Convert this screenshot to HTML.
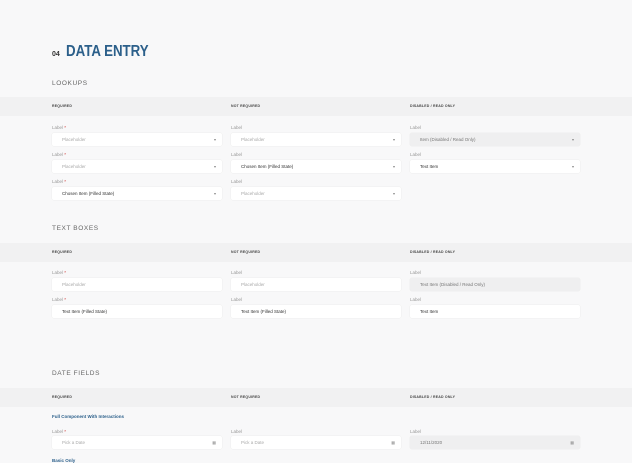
<!DOCTYPE html><html><head><style>
body{margin:0;width:632px;height:462px;background:#f8f8f9;font-family:"Liberation Sans",sans-serif;position:relative;overflow:hidden}
.a{position:absolute;white-space:nowrap}
.band{position:absolute;left:0;width:632px;height:19px;background:#f1f1f2}
.h{position:absolute;font-size:3.5px;font-weight:bold;color:#444;letter-spacing:.2px}
.l{position:absolute;font-size:4.5px;color:#999}
.l b{color:#c33;font-weight:normal}
.f{position:absolute;width:170px;height:13px;background:#fff;border-radius:2px;font-size:4.5px;line-height:13px;text-indent:10px;color:#333;box-shadow:0 0 0 .5px #eee}
.f.p{color:#aaa}.f.d{background:#efeff0;color:#777}
.f i{position:absolute;right:6px;top:0;font-style:normal;font-size:4px;color:#888}
.s{position:absolute;left:52px;font-size:6.5px;color:#666;letter-spacing:.6px}
</style></head><body>
<div class="a" style="left:52px;top:51px;font-size:7px;font-weight:bold;color:#333">04</div>
<div class="a" style="left:66px;top:43px;font-size:16px;font-weight:bold;color:#2b5f8a;transform:scaleX(.83);transform-origin:0 0">DATA ENTRY</div>
<div class="s" style="top:80px">LOOKUPS</div>
<div class="band" style="top:97px"></div>
<div class="h" style="left:52px;top:104px">REQUIRED</div><div class="h" style="left:231px;top:104px">NOT REQUIRED</div><div class="h" style="left:410px;top:104px">DISABLED / READ ONLY</div>
<div class="l" style="left:52px;top:125px">Label <b>*</b></div><div class="l" style="left:231px;top:125px">Label</div><div class="l" style="left:410px;top:125px">Label</div>
<div class="f p" style="left:52px;top:133px">Placeholder<i>▾</i></div><div class="f p" style="left:231px;top:133px">Placeholder<i>▾</i></div><div class="f d" style="left:410px;top:133px">Item (Disabled / Read Only)<i>▾</i></div>
<div class="l" style="left:52px;top:152px">Label <b>*</b></div><div class="l" style="left:231px;top:152px">Label</div><div class="l" style="left:410px;top:152px">Label</div>
<div class="f p" style="left:52px;top:160px">Placeholder<i>▾</i></div><div class="f" style="left:231px;top:160px">Chosen Item (Filled State)<i>▾</i></div><div class="f" style="left:410px;top:160px">Text Item<i>▾</i></div>
<div class="l" style="left:52px;top:179px">Label <b>*</b></div><div class="l" style="left:231px;top:179px">Label</div>
<div class="f" style="left:52px;top:187px">Chosen Item (Filled State)<i>▾</i></div><div class="f p" style="left:231px;top:187px">Placeholder<i>▾</i></div>
<div class="s" style="top:225px">TEXT BOXES</div>
<div class="band" style="top:243px"></div>
<div class="h" style="left:52px;top:250px">REQUIRED</div><div class="h" style="left:231px;top:250px">NOT REQUIRED</div><div class="h" style="left:410px;top:250px">DISABLED / READ ONLY</div>
<div class="l" style="left:52px;top:270px">Label <b>*</b></div><div class="l" style="left:231px;top:270px">Label</div><div class="l" style="left:410px;top:270px">Label</div>
<div class="f p" style="left:52px;top:278px">Placeholder</div><div class="f p" style="left:231px;top:278px">Placeholder</div><div class="f d" style="left:410px;top:278px">Text Item (Disabled / Read Only)</div>
<div class="l" style="left:52px;top:297px">Label <b>*</b></div><div class="l" style="left:231px;top:297px">Label</div><div class="l" style="left:410px;top:297px">Label</div>
<div class="f" style="left:52px;top:305px">Text Item (Filled State)</div><div class="f" style="left:231px;top:305px">Text Item (Filled State)</div><div class="f" style="left:410px;top:305px">Text Item</div>
<div class="s" style="top:370px">DATE FIELDS</div>
<div class="band" style="top:388px"></div>
<div class="h" style="left:52px;top:395px">REQUIRED</div><div class="h" style="left:231px;top:395px">NOT REQUIRED</div><div class="h" style="left:410px;top:395px">DISABLED / READ ONLY</div>
<div class="a" style="left:52px;top:414px;font-size:4.5px;font-weight:bold;color:#2b5f8a">Full Component With Interactions</div>
<div class="l" style="left:52px;top:429px">Label <b>*</b></div><div class="l" style="left:231px;top:429px">Label</div><div class="l" style="left:410px;top:429px">Label</div>
<div class="f p" style="left:52px;top:436px">Pick a Date<i>▦</i></div><div class="f p" style="left:231px;top:436px">Pick a Date<i>▦</i></div><div class="f d" style="left:410px;top:436px">12/11/2020<i>▦</i></div>
<div class="a" style="left:52px;top:458px;font-size:4.5px;font-weight:bold;color:#2b5f8a">Basic Only</div>
</body></html>
